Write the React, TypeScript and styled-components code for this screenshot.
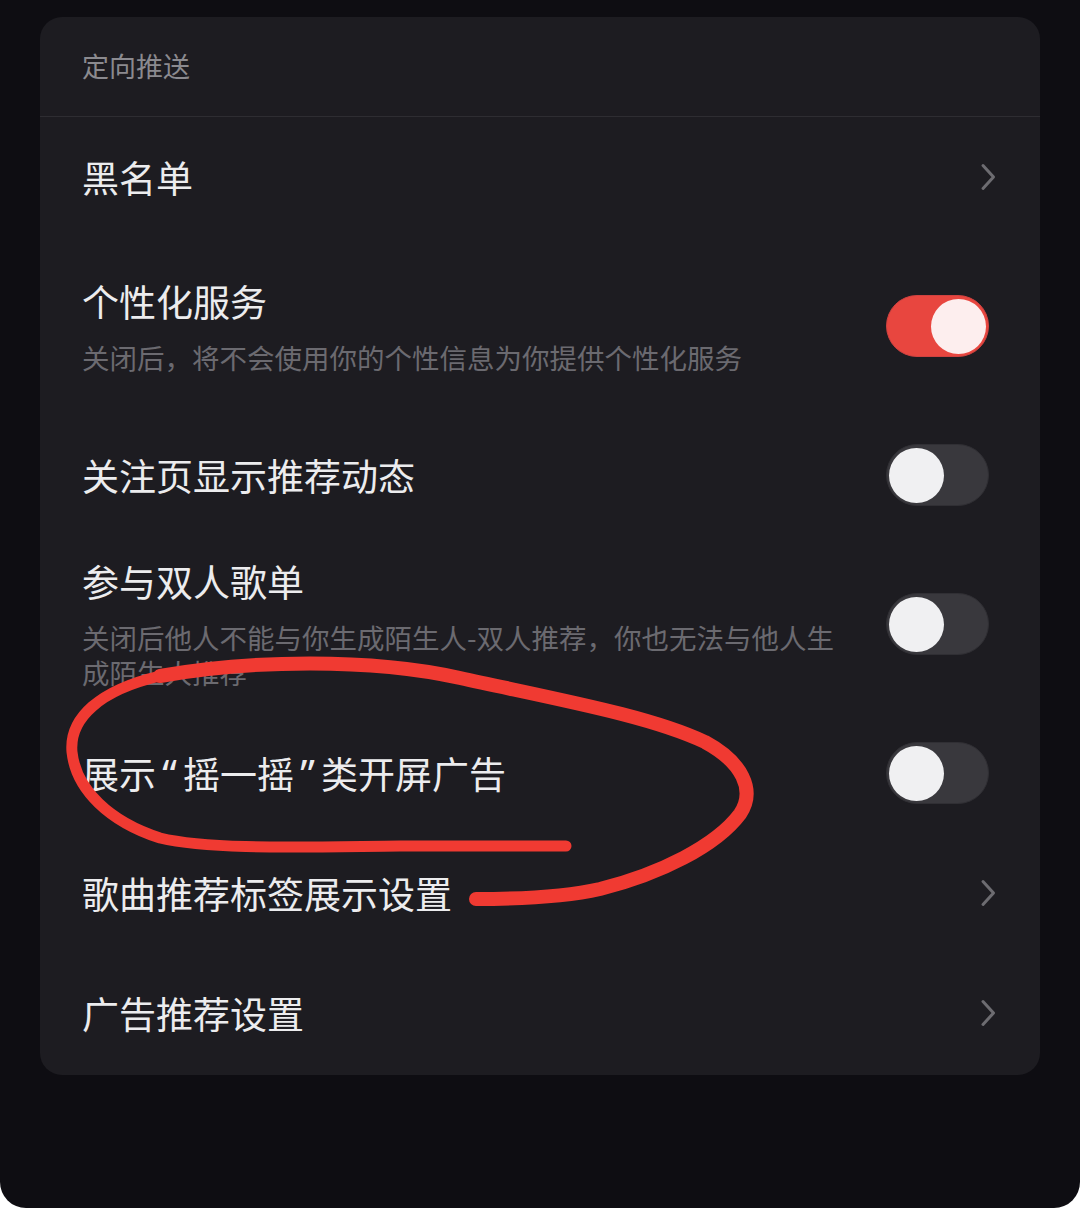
import React from 'react';
import styled, {createGlobalStyle} from "styled-components";

const GlobalStyle = createGlobalStyle`
  html, body {
    margin: 0;
    padding: 0;
    background: #ffffff;
  }
  body {
    font-family: "Noto Sans CJK SC", "Noto Sans", sans-serif;
  }
`

const Screen = styled.div`
  position: relative;
  width: 1080px;
  height: 1208px;
  box-sizing: border-box;
  padding-top: 17px;
  background: #0e0d12;
  border-radius: 0 0 26px 26px;
  overflow: hidden;
`

const Card = styled.section`
  margin: 0 40px;
  padding-bottom: 2px;
  background: #1d1c21;
  border-radius: 22px;
  overflow: hidden;
`

const SectionHeader = styled.header`
  height: 100px;
  display: flex;
  align-items: center;
  padding: 0 42px 3px;
  box-sizing: border-box;
  border-bottom: 1px solid #2e2d32;
  font-size: 27px;
  color: #8b8a8f;
`

const Row = styled.div<{ $tall?: boolean }>`
  display: flex;
  align-items: center;
  justify-content: space-between;
  box-sizing: border-box;
  min-height: ${props => props.$tall ? 178 : 120}px;
  padding: 22px 44px 22px 42px;
`

const Texts = styled.div`
  display: flex;
  flex-direction: column;
  gap: 16px;
  max-width: 770px;
`

const Title = styled.div`
  font-size: 37px;
  line-height: 46px;
  color: #ececee;
  white-space: nowrap;
`

const Quote = styled.span`
  display: inline-block;
  width: 27px;
  text-align: center;
  font-family: "Noto Sans", "Liberation Sans", sans-serif;
  font-size: 1.1em;
  line-height: 1;
`

const Sub = styled.div`
  font-size: 27.5px;
  line-height: 35px;
  color: #6b6a70;
`

const Track = styled.div<{ $on?: boolean }>`
  flex: none;
  position: relative;
  width: 103px;
  height: 62px;
  margin: 0 7px 0 0;
  border-radius: 31px;
  box-sizing: border-box;
  background: ${props => props.$on ? '#e8463f' : '#39383d'};
  border: 1px solid ${props => props.$on ? '#cf4240' : '#302f34'};
`

const Knob = styled.div<{ $on?: boolean }>`
  position: absolute;
  top: 3px;
  left: ${props => props.$on ? 44 : 2}px;
  width: 55px;
  height: 55px;
  border-radius: 50%;
  background: ${props => props.$on ? '#fdeeee' : '#f0f0f2'};
`

const ChevronIcon = styled.svg`
  flex: none;
`

const Annotation = styled.svg`
  position: absolute;
  left: 0;
  top: 0;
  pointer-events: none;
`

function Toggle({on}: { on?: boolean }) {
  return (
    <Track $on={on}>
      <Knob $on={on}/>
    </Track>
  )
}

function Chevron() {
  return (
    <ChevronIcon width="16" height="28" viewBox="0 0 16 28">
      <path d="M3 2.5 L13.5 14 L3 25.5" fill="none" stroke="#6d6c71" strokeWidth="3" strokeLinecap="round" strokeLinejoin="round"/>
    </ChevronIcon>
  )
}

interface IItem {
  id: string
  title: React.ReactNode
  sub?: string
  kind: 'link' | 'switch'
  on?: boolean
}

const items: IItem[] = [
  {id: 'blacklist', title: '黑名单', kind: 'link'},
  {id: 'personal', title: '个性化服务', sub: '关闭后，将不会使用你的个性信息为你提供个性化服务', kind: 'switch', on: true},
  {id: 'follow', title: '关注页显示推荐动态', kind: 'switch'},
  {id: 'duo', title: '参与双人歌单', sub: '关闭后他人不能与你生成陌生人-双人推荐，你也无法与他人生成陌生人推荐', kind: 'switch'},
  {id: 'shake', title: <>展示<Quote>“</Quote>摇一摇<Quote>”</Quote>类开屏广告</>, kind: 'switch'},
  {id: 'tags', title: '歌曲推荐标签展示设置', kind: 'link'},
  {id: 'ads', title: '广告推荐设置', kind: 'link'},
]

function App() {
  return (
    <Screen>
      <GlobalStyle/>
      <Card>
        <SectionHeader>定向推送</SectionHeader>
        {items.map(item => (
          <Row key={item.id} $tall={!!item.sub}>
            <Texts>
              <Title>{item.title}</Title>
              {item.sub && <Sub>{item.sub}</Sub>}
            </Texts>
            {item.kind === 'link' ? <Chevron/> : <Toggle on={item.on}/>}
          </Row>
        ))}
      </Card>
      {/* hand-drawn red marker circle */}
      <Annotation width="1080" height="1208" viewBox="0 0 1080 1208">
        <g fill="none" stroke="#f03a32" strokeLinecap="round" strokeLinejoin="round">
          <path d="M566 846 L400 846 C300 847 210 850 160 838 C110 822 76 790 72 752 C69 718 100 690 160 676"
                strokeWidth="11"/>
          <path d="M160 676 C250 660 370 658 460 678 C560 700 650 716 705 742 C742 762 756 790 740 814 C716 846 660 874 600 889 C560 898 510 899 476 899"
                strokeWidth="14"/>
        </g>
      </Annotation>
    </Screen>
  );
}

export default App;
